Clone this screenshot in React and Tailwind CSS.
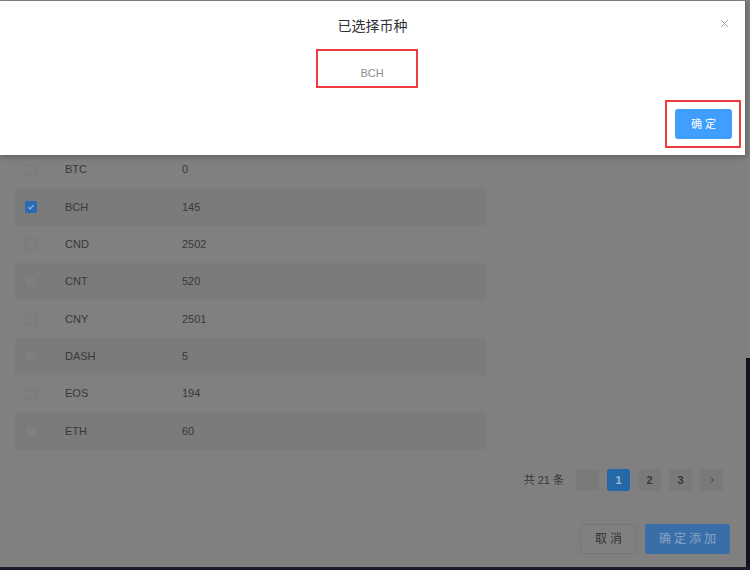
const rows = [
  { code: 'BTC', id: '0' },
  { code: 'BCH', id: '145', checked: true },
  { code: 'CND', id: '2502' },
  { code: 'CNT', id: '520' },
  { code: 'CNY', id: '2501' },
  { code: 'DASH', id: '5' },
  { code: 'EOS', id: '194' },
  { code: 'ETH', id: '60' },
];

const Checkbox = ({ checked }) =>
  checked ? (
    <span className="flex h-[12px] w-[12px] items-center justify-center rounded-[2px] bg-[#2a6bb5]">
      <svg width="8" height="8" viewBox="0 0 8 8" fill="none">
        <path d="M1.5 4.2 3.2 5.8 6.6 2.2" stroke="#9bb8d8" strokeWidth="1.2" />
      </svg>
    </span>
  ) : (
    <span className="h-[12px] w-[12px] rounded-[2px] border border-[#787878] bg-[#7f7f7f]" />
  );

export default function App() {
  return (
    <div className="relative h-[570px] w-[750px] overflow-hidden bg-[#808080] font-['Liberation_Sans','Noto_Sans_CJK_SC',sans-serif] text-[#383838]">
      <div className="flex h-[567px]">
        {/* page behind the mask */}
        <div className="flex w-[746px] flex-col pl-[15px] pt-[151px]">
          <div className="w-[471px]">
            {rows.map((r, i) => (
              <div
                key={r.code}
                className={`flex h-[37.35px] items-center text-[11px] ${i % 2 === 1 ? 'bg-[#7b7b7b]' : ''}`}
              >
                <div className="flex w-[50px] pl-[10px]">
                  <Checkbox checked={r.checked} />
                </div>
                <div className="w-[117px]">{r.code}</div>
                <div>{r.id}</div>
              </div>
            ))}
          </div>

          {/* pagination */}
          <div className="mt-[19px] flex items-center justify-end gap-[8px] pr-[23px] text-[11px]">
            <span className="mr-[4px]">共 21 条</span>
            <span className="flex h-[22px] w-[23px] items-center justify-center rounded-[2px] bg-[#7a7a7a] text-[#6f6f6f]">
              <svg width="8" height="8" viewBox="0 0 8 8" fill="none">
                <path d="M5 1.5 2.5 4 5 6.5" stroke="currentColor" strokeWidth="1" />
              </svg>
            </span>
            <span className="flex h-[22px] w-[23px] items-center justify-center rounded-[2px] bg-[#2468a8] font-bold text-[#9db6d0]">1</span>
            <span className="flex h-[22px] w-[23px] items-center justify-center rounded-[2px] bg-[#7a7a7a] font-bold">2</span>
            <span className="flex h-[22px] w-[23px] items-center justify-center rounded-[2px] bg-[#7a7a7a] font-bold">3</span>
            <span className="flex h-[22px] w-[23px] items-center justify-center rounded-[2px] bg-[#7a7a7a] text-[#3a3a3a]">
              <svg width="8" height="8" viewBox="0 0 8 8" fill="none">
                <path d="M3 1.5 5.5 4 3 6.5" stroke="currentColor" strokeWidth="1" />
              </svg>
            </span>
          </div>

          {/* footer buttons */}
          <div className="mt-[33px] flex justify-end gap-[8px] pr-[16px] text-[12px]">
            <button className="h-[30px] w-[57px] rounded-[3px] border border-[#767676] bg-[#808080] pl-[3px] tracking-[3px] text-[#333]">
              取消
            </button>
            <button className="h-[30px] w-[85px] rounded-[3px] bg-[#3a6ea8] pl-[3px] tracking-[3px] text-[#86a4c6]">
              确定添加
            </button>
          </div>
        </div>
        <div className="flex w-[4px] flex-col">
          <div className="h-[358px]" />
          <div className="flex-1 bg-[#111124]" />
        </div>
      </div>
      <div className="h-[3px] bg-[#1b1b2c]" />

      {/* dialog over the mask */}
      <div className="absolute left-0 top-[1px] flex h-[154px] w-[746px] flex-col border-r border-[#6c6c6c] bg-white shadow-[0_2px_6px_rgba(0,0,0,0.25)]">
        <div className="relative flex h-[48px] items-center justify-center pt-[2px] text-[14px] text-[#303133]">
          已选择币种
          <svg className="absolute right-[16px] top-[18px]" width="9" height="9" viewBox="0 0 9 9" fill="none">
            <path d="M1 1 8 8M8 1 1 8" stroke="#a0a3a8" strokeWidth="1" />
          </svg>
        </div>
        <div className="flex justify-center pr-[11px]">
          <div className="flex h-[39px] w-[102px] items-center justify-center border-2 border-[#ee3b3e] pl-[10px] pt-[10px] text-[11px] text-[#8c8c8c]">
            BCH
          </div>
        </div>
        <div className="flex justify-end pr-[4px] pt-[12px]">
          <div className="flex h-[48px] w-[76px] items-center justify-center border-2 border-[#ee3b3e] pl-[1px]">
            <button className="h-[30px] w-[57px] rounded-[3px] bg-[#409eff] pl-[3px] text-[11px] tracking-[3px] text-white">
              确定
            </button>
          </div>
        </div>
      </div>
    </div>
  );
}
